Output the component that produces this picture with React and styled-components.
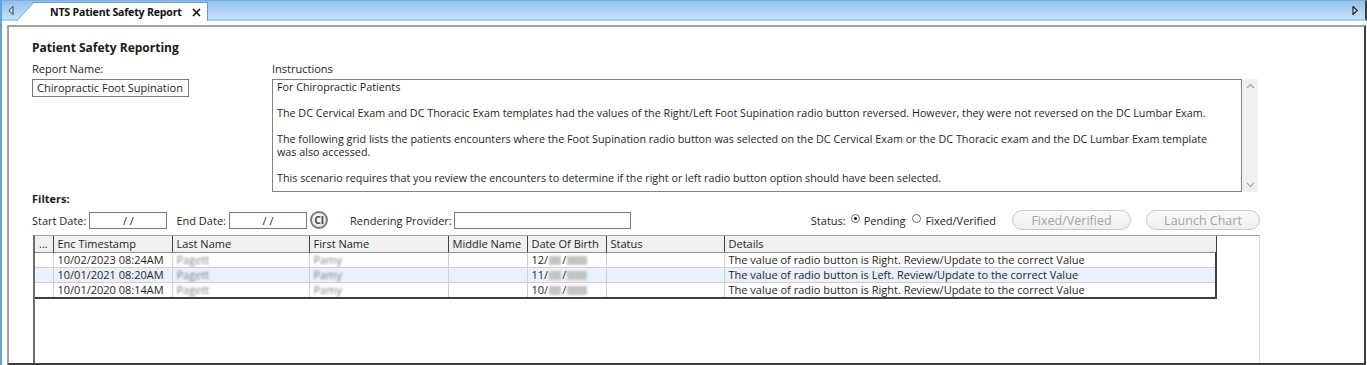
import React from "react";
import styled, { createGlobalStyle } from "styled-components";

const FONT = `"Open Sans", "Noto Sans", sans-serif`;

const GlobalStyle = createGlobalStyle`
  html, body {
    margin: 0;
    padding: 0;
    background: #ffffff;
  }
  body {
    font-family: ${FONT};
    font-size: 11px;
    color: #1e1e1e;
  }
  #root {
    width: 1367px;
    height: 365px;
    overflow: hidden;
  }
`;

const Window = styled.div`
  width: 1367px;
  height: 365px;
  box-sizing: border-box;
  border-left: 2px solid #5aa3e4;
  display: flex;
  flex-direction: column;
  overflow: hidden;
`;

const TabStrip = styled.div`
  height: 21px;
  box-sizing: border-box;
  display: flex;
  align-items: flex-end;
  background: linear-gradient(#93c1ec, #c6e0f7);
  border-top: 1px solid #7eaedc;
  border-bottom: 2px solid #9fd3f6;
  border-right: 2px solid #3a3a3a;
  position: relative;
`;

const ArrowBtn = styled.div`
  width: 14px;
  height: 18px;
  display: flex;
  align-items: center;
  justify-content: center;
  align-self: center;
  margin-left: ${(p) => (p.right ? "auto" : "2px")};
  margin-right: ${(p) => (p.right ? "3px" : "0")};
`;

const Tab = styled.div`
  position: relative;
  z-index: 1;
  margin-left: 14px;
  margin-bottom: -2px;
  height: 19px;
  width: 176px;
  box-sizing: border-box;
  background: #ffffff;
  border-top: 1px solid #5e9fd8;
  border-right: 1px solid #5e9fd8;
  display: flex;
  align-items: center;
  padding-left: 18px;

  &::before {
    content: "";
    position: absolute;
    z-index: -1;
    left: -16px;
    top: -1px;
    bottom: 0;
    width: 24px;
    background: #ffffff;
    border-top: 1px solid #5e9fd8;
    border-left: 1px solid #5e9fd8;
    transform: skewX(-43deg);
    transform-origin: bottom left;
  }
`;

const TabTitle = styled.span`
  font-weight: 700;
  font-size: 10.6px;
  letter-spacing: -0.2px;
  color: #111;
  white-space: nowrap;
`;

const TabClose = styled.span`
  margin-left: 10px;
  display: flex;
  align-items: center;
`;

const Gap = styled.div`
  height: 4px;
  flex: none;
`;

const Panel = styled.div`
  flex: 1;
  min-height: 0;
  margin-left: 5px;
  margin-right: 1px;
  border-top: 2px solid #a3a3a3;
  border-left: 2px solid #a3a3a3;
  border-right: 2px solid #3c3c3c;
  border-bottom: 2px solid #3c3c3c;
  padding: 13px 104px 0 23px;
  display: flex;
  flex-direction: column;
  overflow: hidden;
`;

const Title = styled.div`
  font-weight: 700;
  font-size: 12px;
  line-height: 16px;
  color: #1a1a1a;
`;

const FormGrid = styled.div`
  margin-top: 5px;
  display: grid;
  grid-template-columns: 240px 970px 16px;
  grid-template-rows: 16px 113px;
  row-gap: 2px;
`;

const Label = styled.div`
  line-height: 16px;
  white-space: nowrap;
  grid-column: ${(p) => p.span || "auto"};
`;

const TextBox = styled.div`
  box-sizing: border-box;
  height: ${(p) => p.h || 18}px;
  width: ${(p) => p.w}px;
  border: 1px solid #7a7a7a;
  background: #fff;
  padding: 0 4px;
  line-height: 16px;
  white-space: nowrap;
  overflow: hidden;
  text-align: ${(p) => (p.center ? "center" : "left")};
  flex: none;
`;

const Instructions = styled.div`
  box-sizing: border-box;
  border: 1px solid #828282;
  padding: 1px 4px 0;
  font-size: 10.75px;
  line-height: 13px;
  overflow: hidden;
`;

const Para = styled.p`
  margin: 0 0 13px 0;
`;

const ScrollBar = styled.div`
  background: #f0f0f0;
  display: flex;
  flex-direction: column;
  justify-content: space-between;
  align-items: center;
  padding: 4px 0;
  box-sizing: border-box;
`;

const SectionLabel = styled.div`
  font-weight: 700;
  line-height: 14px;
`;

const FilterRow = styled.div`
  margin-top: 3px;
  height: 22px;
  display: flex;
  align-items: center;
`;

const FieldLabel = styled.span`
  white-space: nowrap;
  margin-left: ${(p) => p.ml || 0}px;
  margin-right: ${(p) => p.mr ?? 3}px;
`;

const ClearBtn = styled.div`
  margin-left: 3px;
  width: 18px;
  height: 18px;
  box-sizing: border-box;
  border-radius: 50%;
  border: 2px solid #7c7c7c;
  background: radial-gradient(circle at 40% 35%, #ffffff, #dcdcdc);
  display: flex;
  align-items: center;
  justify-content: center;
  font-size: 10.5px;
  font-weight: 700;
  color: #444;
  letter-spacing: -0.3px;
  line-height: 1;
`;

const StatusGroup = styled.div`
  margin-left: auto;
  display: flex;
  align-items: center;
`;

const Radio = styled.span`
  width: 9px;
  height: 9px;
  box-sizing: border-box;
  border-radius: 50%;
  border: 1px solid #6a6a6a;
  background: #fff;
  display: inline-flex;
  align-items: center;
  justify-content: center;
  margin: 0 4px 0 ${(p) => p.ml || 0}px;
  position: relative;
  top: -2px;

  &::after {
    content: "";
    width: 3px;
    height: 3px;
    border-radius: 50%;
    background: ${(p) => (p.checked ? "#111" : "transparent")};
  }
`;

const DisabledButton = styled.div`
  width: ${(p) => p.w}px;
  height: 20px;
  box-sizing: border-box;
  margin-left: ${(p) => p.ml}px;
  border: 1px solid #c9c9c9;
  border-radius: 10px;
  background: linear-gradient(#fafafa, #efefef);
  color: #a3a3a3;
  font-size: 12.5px;
  display: flex;
  align-items: center;
  justify-content: center;
`;

const GridPanel = styled.div`
  margin-top: 4px;
  margin-left: 1px;
  flex: 1;
  border-top: 1px solid #a0a0a0;
  border-left: 2px solid #6d6d6d;
  border-right: 1px solid #d9d9d9;
`;

const Table = styled.table`
  border-collapse: collapse;
  table-layout: fixed;
  width: 1181px;
  font-size: 11px;
`;

const Th = styled.th`
  background: #f0f0f0;
  height: 16px;
  padding: 0 0 0 4px;
  text-align: left;
  font-weight: 400;
  border-right: 1px solid #3f3f3f;
  border-bottom: 1px solid #8c8c8c;
  white-space: nowrap;
  overflow: hidden;
  line-height: 16px;
`;

const Tr = styled.tr`
  background: ${(p) => (p.alt ? "#eaf1fc" : "#ffffff")};
  &:last-child td {
    border-bottom: 2px solid #3f3f3f;
  }
`;

const Td = styled.td`
  height: 14px;
  padding: 0 0 0 4px;
  line-height: 14px;
  border-right: 1px solid #cfcfcf;
  border-bottom: 1px solid #cfcfcf;
  white-space: nowrap;
  overflow: hidden;

  &:last-child {
    border-right: 2px solid #3f3f3f;
  }
`;

const Blurred = styled.span`
  color: #5d6068;
  filter: blur(1.2px);
  opacity: 0.8;
`;

const BlurBlock = styled.span`
  display: inline-block;
  width: ${(p) => p.w}px;
  height: 9px;
  background: #c4c4c4;
  filter: blur(0.8px);
  vertical-align: -1px;
  margin: 0 1px;
`;

const columns = [
  { label: "...", w: 18 },
  { label: "Enc Timestamp", w: 119 },
  { label: "Last Name", w: 137 },
  { label: "First Name", w: 139 },
  { label: "Middle Name", w: 79 },
  { label: "Date Of Birth", w: 79 },
  { label: "Status", w: 118 },
  { label: "Details", w: 492 },
];

const rows = [
  { ts: "10/02/2023 08:24AM", dob: "12", side: "Right" },
  { ts: "10/01/2021 08:20AM", dob: "11", side: "Left" },
  { ts: "10/01/2020 08:14AM", dob: "10", side: "Right" },
];

const Chevron = ({ up }) => (
  <svg width="9" height="6" viewBox="0 0 9 6">
    <polyline
      points={up ? "1,5 4.5,1.5 8,5" : "1,1 4.5,4.5 8,1"}
      fill="none"
      stroke="#a6a6a6"
      strokeWidth="1.1"
    />
  </svg>
);

const App = () => {
  return (
    <>
      <GlobalStyle />
      <Window>
        <TabStrip>
          <ArrowBtn>
            <svg width="6" height="9" viewBox="0 0 6 9">
              <polygon points="5,0.5 0.8,4.5 5,8.5" fill="#dbe9f7" stroke="#333" strokeWidth="1" />
            </svg>
          </ArrowBtn>
          <Tab>
            <TabTitle>NTS Patient Safety Report</TabTitle>
            <TabClose>
              <svg width="9" height="9" viewBox="0 0 9 9">
                <path d="M1 1 L8 8 M8 1 L1 8" stroke="#111" strokeWidth="1.6" />
              </svg>
            </TabClose>
          </Tab>
          <ArrowBtn right>
            <svg width="6" height="9" viewBox="0 0 6 9">
              <polygon points="1,0.5 5.2,4.5 1,8.5" fill="#dbe9f7" stroke="#222" strokeWidth="1.2" />
            </svg>
          </ArrowBtn>
        </TabStrip>
        <Gap />
        <Panel>
          <Title>Patient Safety Reporting</Title>
          <FormGrid>
            <Label>Report Name:</Label>
            <Label span="2 / 4">Instructions</Label>
            <div>
              <TextBox w={157}>Chiropractic Foot Supination</TextBox>
            </div>
            <Instructions>
              <Para>For Chiropractic Patients</Para>
              <Para>
                The DC Cervical Exam and DC Thoracic Exam templates had the values of the Right/Left Foot
                Supination radio button reversed. However, they were not reversed on the DC Lumbar Exam.
              </Para>
              <Para>
                The following grid lists the patients encounters where the Foot Supination radio button was
                selected on the DC Cervical Exam or the DC Thoracic exam and the DC Lumbar Exam template
                <br />
                was also accessed.
              </Para>
              <Para>
                This scenario requires that you review the encounters to determine if the right or left radio
                button option should have been selected.
              </Para>
            </Instructions>
            <ScrollBar>
              <Chevron up />
              <Chevron />
            </ScrollBar>
          </FormGrid>

          <SectionLabel>Filters:</SectionLabel>
          <FilterRow>
            <FieldLabel>Start Date:</FieldLabel>
            <TextBox w={78} h={17} center>
              / /
            </TextBox>
            <FieldLabel ml={9}>End Date:</FieldLabel>
            <TextBox w={78} h={17} center>
              / /
            </TextBox>
            <ClearBtn>Cl</ClearBtn>
            <FieldLabel ml={22} mr={2}>
              Rendering Provider:
            </FieldLabel>
            <TextBox w={177} h={17} />
            <StatusGroup>
              <FieldLabel mr={5}>Status:</FieldLabel>
              <Radio checked />
              <FieldLabel mr={0}>Pending</FieldLabel>
              <Radio ml={7} />
              <FieldLabel mr={0}>Fixed/Verified</FieldLabel>
              <DisabledButton w={119} ml={16}>
                Fixed/Verified
              </DisabledButton>
              <DisabledButton w={114} ml={15}>
                Launch Chart
              </DisabledButton>
            </StatusGroup>
          </FilterRow>

          <GridPanel>
            <Table>
              <colgroup>
                {columns.map((c) => (
                  <col key={c.label} style={{ width: c.w }} />
                ))}
              </colgroup>
              <thead>
                <tr>
                  {columns.map((c) => (
                    <Th key={c.label}>{c.label}</Th>
                  ))}
                </tr>
              </thead>
              <tbody>
                {rows.map((r, i) => (
                  <Tr key={r.ts} alt={i === 1}>
                    <Td />
                    <Td>{r.ts}</Td>
                    <Td>
                      <Blurred>Pagett</Blurred>
                    </Td>
                    <Td>
                      <Blurred>Pamy</Blurred>
                    </Td>
                    <Td />
                    <Td>
                      {r.dob}/<BlurBlock w={12} />/<BlurBlock w={20} />
                    </Td>
                    <Td />
                    <Td>The value of radio button is {r.side}. Review/Update to the correct Value</Td>
                  </Tr>
                ))}
              </tbody>
            </Table>
          </GridPanel>
        </Panel>
      </Window>
    </>
  );
};

export default App;
